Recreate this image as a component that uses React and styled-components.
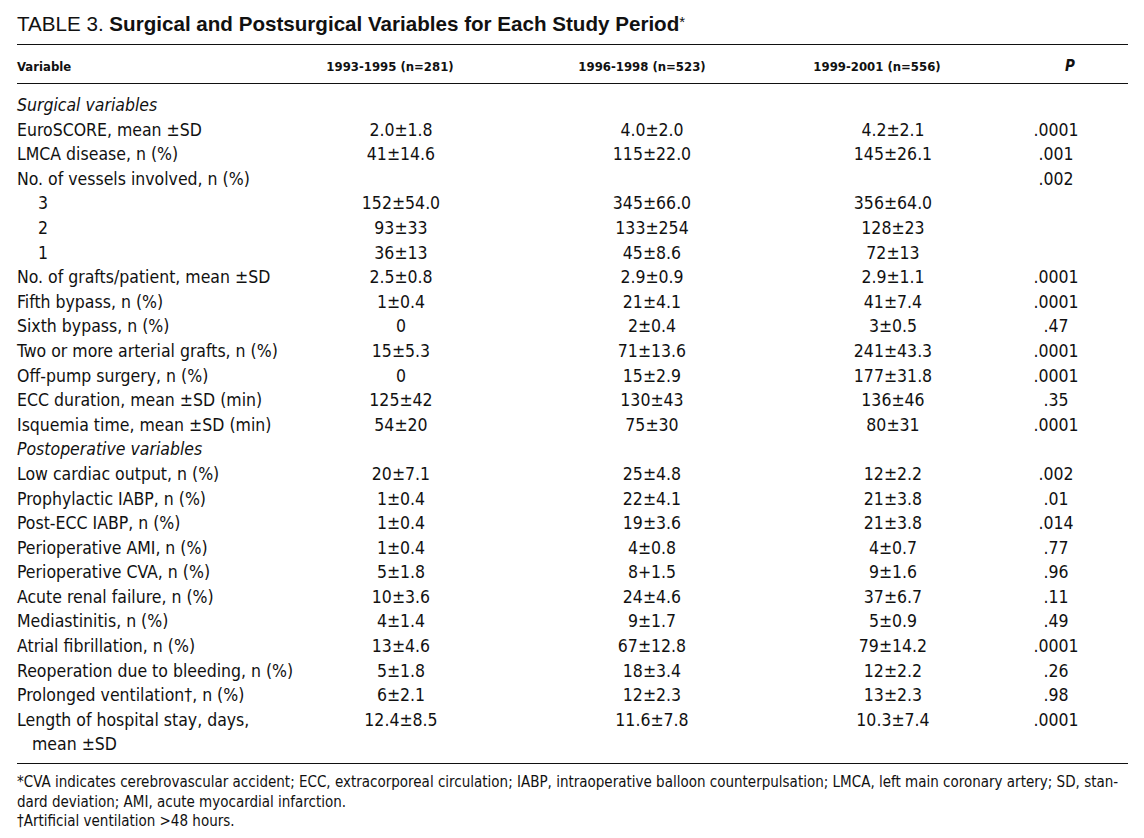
import React from 'react';
import styled, { createGlobalStyle } from 'styled-components';

const GlobalStyle = createGlobalStyle`
  html, body {
    margin: 0;
    padding: 0;
    background: #ffffff;
  }
  body {
    font-family: "DejaVu Sans Condensed", "Liberation Sans", sans-serif;
    color: #111111;
  }
`;

const Page = styled.div`
  width: 1111px;
  padding: 0 16px 0 17px;
`;

const Title = styled.div`
  height: 32px;
  padding-top: 12px;
  line-height: 24px;
  font-family: "Liberation Sans", Arial, sans-serif;
  font-size: 20.6px;
  color: #111;
  border-bottom: 1px solid #111;

  b {
    font-weight: bold;
  }

  sup {
    font-weight: normal;
    font-size: 15px;
    vertical-align: 4px;
    line-height: 0;
  }
`;

const cols = '270px 228px 274px 208px 118px';

const HeadRow = styled.div`
  display: grid;
  grid-template-columns: ${cols};
  align-items: center;
  height: 34px;
  padding-top: 4px;
  border-bottom: 1px solid #111;
  font-size: 13px;
  font-weight: bold;
`;

const HeadCell = styled.div`
  text-align: ${(p) => (p.$left ? 'left' : 'center')};
  padding-left: ${(p) => (p.$shift > 0 ? p.$shift * 2 : 0)}px;
  padding-right: ${(p) => (p.$shift < 0 ? -p.$shift * 2 : 0)}px;
  font-style: ${(p) => (p.$italic ? 'italic' : 'normal')};
  font-size: ${(p) => (p.$italic ? '15px' : 'inherit')};
`;

const Body = styled.div`
  padding: 9px 0 6px;
  border-bottom: 1px solid #111;
`;

const Row = styled.div`
  display: grid;
  grid-template-columns: ${cols};
  align-items: start;
  font-size: 17.5px;
  line-height: 24.6px;
`;

const Label = styled.div`
  padding-left: ${(p) => p.$indent || 0}px;
  font-style: ${(p) => (p.$italic ? 'italic' : 'normal')};
  white-space: nowrap;
`;

const Wrapped = styled.div`
  padding-left: 15px;
`;

const Cell = styled.div`
  text-align: center;
  white-space: nowrap;
`;

const Notes = styled.div`
  padding-top: 9px;
  font-size: 15px;
  line-height: 19.5px;
`;

const NoteLine = styled.div`
  white-space: nowrap;
`;

const rows = [
  { label: 'Surgical variables', section: true },
  { label: 'EuroSCORE, mean ±SD', v: ['2.0±1.8', '4.0±2.0', '4.2±2.1', '.0001'] },
  { label: 'LMCA disease, n (%)', v: ['41±14.6', '115±22.0', '145±26.1', '.001'] },
  { label: 'No. of vessels involved, n (%)', v: ['', '', '', '.002'] },
  { label: '3', indent: 21, v: ['152±54.0', '345±66.0', '356±64.0', ''] },
  { label: '2', indent: 21, v: ['93±33', '133±254', '128±23', ''] },
  { label: '1', indent: 21, v: ['36±13', '45±8.6', '72±13', ''] },
  { label: 'No. of grafts/patient, mean ±SD', v: ['2.5±0.8', '2.9±0.9', '2.9±1.1', '.0001'] },
  { label: 'Fifth bypass, n (%)', v: ['1±0.4', '21±4.1', '41±7.4', '.0001'] },
  { label: 'Sixth bypass, n (%)', v: ['0', '2±0.4', '3±0.5', '.47'] },
  { label: 'Two or more arterial grafts, n (%)', v: ['15±5.3', '71±13.6', '241±43.3', '.0001'] },
  { label: 'Off-pump surgery, n (%)', v: ['0', '15±2.9', '177±31.8', '.0001'] },
  { label: 'ECC duration, mean ±SD (min)', v: ['125±42', '130±43', '136±46', '.35'] },
  { label: 'Isquemia time, mean ±SD (min)', v: ['54±20', '75±30', '80±31', '.0001'] },
  { label: 'Postoperative variables', section: true },
  { label: 'Low cardiac output, n (%)', v: ['20±7.1', '25±4.8', '12±2.2', '.002'] },
  { label: 'Prophylactic IABP, n (%)', v: ['1±0.4', '22±4.1', '21±3.8', '.01'] },
  { label: 'Post-ECC IABP, n (%)', v: ['1±0.4', '19±3.6', '21±3.8', '.014'] },
  { label: 'Perioperative AMI, n (%)', v: ['1±0.4', '4±0.8', '4±0.7', '.77'] },
  { label: 'Perioperative CVA, n (%)', v: ['5±1.8', '8+1.5', '9±1.6', '.96'] },
  { label: 'Acute renal failure, n (%)', v: ['10±3.6', '24±4.6', '37±6.7', '.11'] },
  { label: 'Mediastinitis, n (%)', v: ['4±1.4', '9±1.7', '5±0.9', '.49'] },
  { label: 'Atrial fibrillation, n (%)', v: ['13±4.6', '67±12.8', '79±14.2', '.0001'] },
  { label: 'Reoperation due to bleeding, n (%)', v: ['5±1.8', '18±3.4', '12±2.2', '.26'] },
  { label: 'Prolonged ventilation†, n (%)', v: ['6±2.1', '12±2.3', '13±2.3', '.98'] },
  { label: 'Length of hospital stay, days,', more: 'mean ±SD', v: ['12.4±8.5', '11.6±7.8', '10.3±7.4', '.0001'] },
];

export default function App() {
  return (
    <Page>
      <GlobalStyle />
      <Title>
        TABLE 3. <b>Surgical and Postsurgical Variables for Each Study Period</b>
        <sup>*</sup>
      </Title>

      <HeadRow>
        <HeadCell $left>Variable</HeadCell>
        <HeadCell $shift={-11}>1993-1995 (n=281)</HeadCell>
        <HeadCell $shift={-10}>1996-1998 (n=523)</HeadCell>
        <HeadCell $shift={-16}>1999-2001 (n=556)</HeadCell>
        <HeadCell $shift={14} $italic>P</HeadCell>
      </HeadRow>

      <Body>
        {rows.map((r) => (
          <Row key={r.label}>
            <Label $indent={r.indent} $italic={r.section}>
              {r.label}
              {r.more && <Wrapped>{r.more}</Wrapped>}
            </Label>
            {(r.v || ['', '', '', '']).map((val, i) => (
              <Cell key={i}>{val}</Cell>
            ))}
          </Row>
        ))}
      </Body>

      <Notes>
        <NoteLine>
          *CVA indicates cerebrovascular accident; ECC, extracorporeal circulation; IABP, intraoperative balloon counterpulsation; LMCA, left main coronary artery; SD, stan-
        </NoteLine>
        <NoteLine>dard deviation; AMI, acute myocardial infarction.</NoteLine>
        <NoteLine>†Artificial ventilation &gt;48 hours.</NoteLine>
      </Notes>
    </Page>
  );
}
